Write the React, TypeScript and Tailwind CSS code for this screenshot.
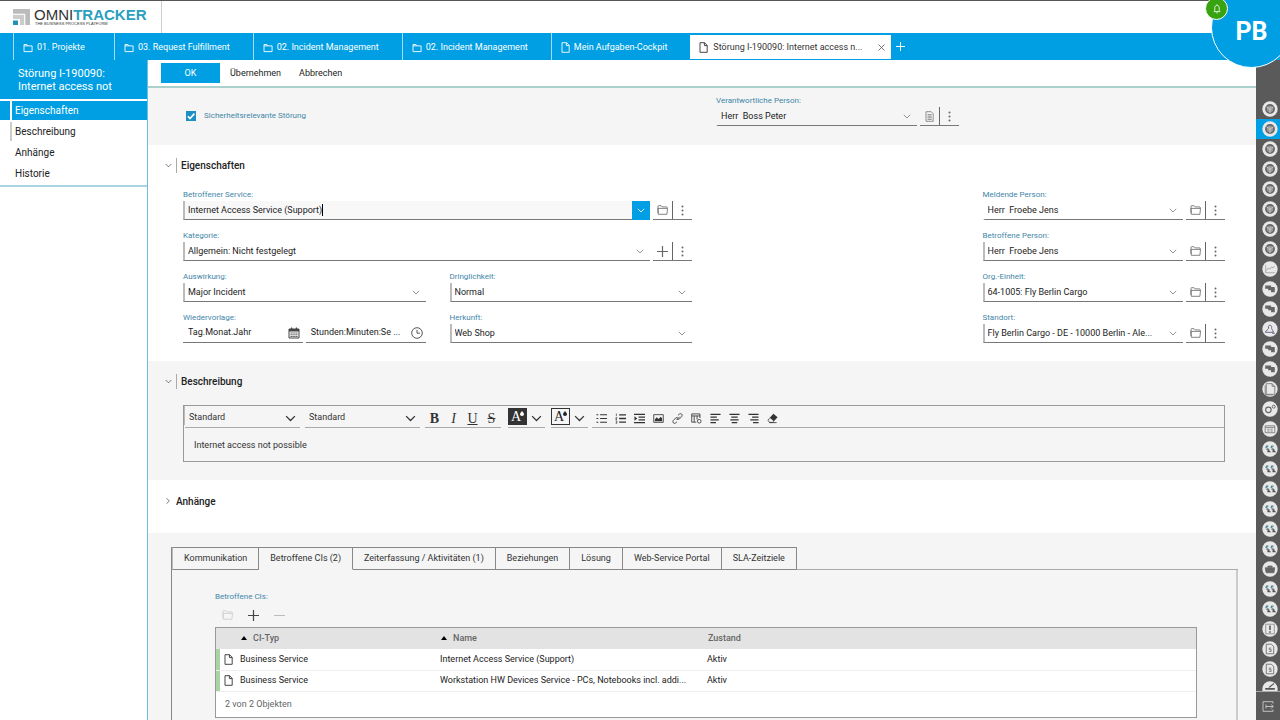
import type { ReactNode } from "react";
import { clsx } from "clsx";

function FolderIcon({ className = "h-[10px] w-[11px]" }: { className?: string }) {
  return (
    <svg viewBox="0 0 11 10" className={className} fill="none" stroke="currentColor" strokeWidth="0.8">
      <path d="M1 8V1.2c0-.3.2-.5.5-.5h2.6l1 1.2h4.6c.3 0 .5.2.5.5v1" />
      <path d="M.9 3.4h9.6l-.6 5.9H1.3z" />
    </svg>
  );
}

function TabFolderIcon() {
  return (
    <svg viewBox="0 0 10 10" className="h-[10px] w-[10px] shrink-0" fill="none" stroke="currentColor" strokeWidth="0.9">
      <path d="M1 8.6V1.5h3l.9 1.4h4.2v5.7zM1 2.9h3.9" />
    </svg>
  );
}

function DocIcon({ className = "h-[11px] w-[9px] shrink-0" }: { className?: string }) {
  return (
    <svg viewBox="0 0 9 11" className={className} fill="none" stroke="currentColor" strokeWidth="0.9">
      <path d="M1 .7h4.6L8.2 3.4v6.9H1zM5.4.7v2.9h2.8" />
    </svg>
  );
}

function ReportIcon() {
  return (
    <svg viewBox="0 0 9 11" className="h-[11px] w-[9px]" fill="none" stroke="currentColor" strokeWidth="0.7">
      <path d="M1 .7h5.2l2 2v7.6H1zM2.5 3.6h4.2M2.5 5.2h4.2M2.5 6.8h4.2M2.5 8.4h4.2" />
    </svg>
  );
}

function Chevron({ className = "h-[5px] w-[8px]" }: { className?: string }) {
  return (
    <svg viewBox="0 0 8 5" className={className} fill="none" stroke="currentColor" strokeWidth="0.9">
      <path d="M.8.8 4 4 7.2.8" />
    </svg>
  );
}

function PlusIcon({ className = "h-[11px] w-[11px]" }: { className?: string }) {
  return (
    <svg viewBox="0 0 11 11" className={className} fill="none" stroke="currentColor" strokeWidth="1.2">
      <path d="M5.5 0v11M0 5.5h11" />
    </svg>
  );
}

function DotsIcon() {
  return (
    <svg viewBox="0 0 3 11" className="h-[11px] w-[3px]" fill="currentColor">
      <circle cx="1.5" cy="1.6" r="1" />
      <circle cx="1.5" cy="5.5" r="1" />
      <circle cx="1.5" cy="9.4" r="1" />
    </svg>
  );
}

function Label({ htmlFor, children }: { htmlFor: string; children: ReactNode }) {
  return (
    <label htmlFor={htmlFor} className="block text-[8px] leading-3 text-[#3f86a8]">
      {children}
    </label>
  );
}

interface SelectFieldProps {
  id: string;
  label: string;
  value: string;
  required?: boolean;
  action?: ReactNode;
  actionLabel?: string;
}

function FieldActions({ icon, label }: { icon: ReactNode; label: string }) {
  return (
    <div className="flex h-[19px] w-[39px] shrink-0 border-b border-[#777] text-[#666]">
      <button aria-label={label} className="flex flex-1 items-center justify-center">
        {icon}
      </button>
      <button aria-label="Weitere Aktionen" className="flex w-5 items-center justify-center border-l border-[#666]">
        <DotsIcon />
      </button>
    </div>
  );
}

function SelectField({ id, label, value, required = true, action, actionLabel = "Öffnen" }: SelectFieldProps) {
  return (
    <div className="min-w-0">
      <Label htmlFor={id}>{label}</Label>
      <div className="flex gap-[3px]">
        <div
          className={clsx(
            "relative h-[19px] min-w-0 flex-1 border-b border-l-2 border-b-[#777]",
            required ? "border-l-[#bbb]" : "border-l-transparent",
          )}
        >
          <select
            id={id}
            defaultValue={value}
            className="block h-full w-full appearance-none bg-transparent pt-px pr-4 pl-[3px] text-[9px] text-[#222] outline-none"
          >
            <option>{value}</option>
          </select>
          <span className="pointer-events-none absolute inset-y-0 right-[6px] flex items-center text-[#888]">
            <Chevron />
          </span>
        </div>
        {action && <FieldActions icon={action} label={actionLabel} />}
      </div>
    </div>
  );
}

function SectionTitle({ children, open = true }: { children: ReactNode; open?: boolean }) {
  return (
    <button className="flex h-[15px] items-center pl-4 text-[10px] font-medium text-[#222]">
      <span className={clsx("flex w-2 justify-center text-[#555]", !open && "-rotate-90")}>
        <Chevron className="h-[5px] w-[7px]" />
      </span>
      <span className={clsx("flex h-full items-center pl-1", open && "ml-1 border-l border-[#aaa]")}>
        {children}
      </span>
    </button>
  );
}

const openTabs = [
  { name: "01. Projekte", folder: true },
  { name: "03. Request Fulfillment", folder: true },
  { name: "02. Incident Management", folder: true },
  { name: "02. Incident Management", folder: true },
  { name: "Mein Aufgaben-Cockpit", folder: false },
];

function Header() {
  return (
    <header className="relative shrink-0">
      <div className="flex h-[33px] border-t border-[#555] bg-white">
        <div className="flex w-[162px] items-center border-r border-[#ccc] pl-[13px]">
          <svg viewBox="0 0 17 17" className="h-[17px] w-[17px]">
            <path d="M0 0h17v16h-5V5H0z" fill="#bbb" />
            <path d="M0 6h11v10H7V10H0z" fill="#ccc" />
            <path d="M0 5h12v11" fill="none" stroke="#eee" strokeWidth="0.8" />
            <path d="M0 11.5h5V16H0z" fill="#2191b5" />
          </svg>
          <div className="ml-1 font-['Liberation_Sans',sans-serif]">
            <div className="text-[15px] leading-[14px] text-[#333]">
              OMNI<span className="font-bold text-[#2a9fc0]">TRACKER</span>
            </div>
            <div className="pl-px text-[4px] leading-[4px] text-[#333]">THE BUSINESS PROCESS PLATFORM</div>
          </div>
        </div>
      </div>
      <nav className="flex h-[27px] bg-[#009fe3] pl-[13px] text-[9px] text-white">
        {openTabs.map((tab, i) => (
          <button
            key={i}
            className="flex min-w-[101px] items-center gap-1 border-l border-[#a5dbf3] pt-[2px] pr-[23px] pl-[9px] whitespace-nowrap"
          >
            {tab.folder ? <TabFolderIcon /> : <DocIcon />}
            {tab.name}
          </button>
        ))}
        <div className="mt-[2px] mb-px flex w-[201px] items-center bg-white pr-[6px] pl-[9px] text-[#333]">
          <DocIcon />
          <button className="ml-[5px] flex-1 pt-px text-left whitespace-nowrap">Störung I-190090: Internet access n...</button>
          <button aria-label="Tab schließen">
            <svg viewBox="0 0 7 7" className="h-[7px] w-[7px]" stroke="#555" strokeWidth="0.8">
              <path d="M.5.5l6 6M6.5.5l-6 6" />
            </svg>
          </button>
        </div>
        <button aria-label="Neuer Tab" className="px-[5px]">
          <PlusIcon className="h-[9px] w-[9px]" />
        </button>
      </nav>
      <button
        aria-label="Benutzerprofil"
        className="absolute -top-[13px] -right-[12px] z-10 flex h-[81px] w-[81px] items-center justify-center rounded-full border border-white bg-[#009fe3] pt-[8px] text-[25px] font-bold text-white"
      >
        PB
      </button>
      <button
        aria-label="Benachrichtigungen"
        className="absolute -top-[3px] right-[52px] z-20 flex h-[23px] w-[23px] items-center justify-center rounded-full border border-white bg-[#37a310]"
      >
        <svg viewBox="0 0 8 10" className="h-[10px] w-[8px]" fill="none" stroke="#fff" strokeWidth="0.8">
          <path d="M1 7.6h6L6.2 6.4V3.8C6.2 2.3 5.2 1.3 4 1.3S1.8 2.3 1.8 3.8v2.6zM3.2 8.8h1.6M4 .4v.9" />
        </svg>
      </button>
    </header>
  );
}

const navItems = ["Eigenschaften", "Beschreibung", "Anhänge", "Historie"];

function Sidebar() {
  return (
    <aside className="w-[148px] shrink-0 border-r border-[#6dbfdf] bg-white">
      <h1 className="flex h-[39px] items-center bg-[#009fe3] pr-4 pl-[18px] text-[11px] leading-[13px] text-white">
        Störung I-190090: Internet access not
      </h1>
      <ul className="mt-[2px] border-b-2 border-[#a9d5e2] text-[10px] text-[#222]">
        {navItems.map((item, i) => (
          <li key={item} className={clsx("h-[21px]", i === 0 && "text-white")}>
            <a href={`#${item}`} className={clsx("flex h-[19px] items-center pl-[10px]", i === 0 && "bg-[#009fe3]")}>
              <span
                className={clsx(
                  "flex h-full items-center border-l-2 pl-[3px]",
                  i === 0 && "border-white",
                  i === 1 && "border-[#ccc]",
                  i > 1 && "border-transparent",
                )}
              >
                {item}
              </span>
            </a>
          </li>
        ))}
      </ul>
    </aside>
  );
}

type RailKind = "wheel" | "chart" | "flow" | "person" | "doc" | "gears" | "calendar" | "links" | "case" | "alert" | "price" | "sign";

const railItems: RailKind[] = [
  "wheel", "wheel", "wheel", "wheel", "wheel", "wheel", "wheel", "wheel",
  "chart", "flow", "flow", "person", "flow", "flow", "doc", "gears", "calendar",
  "links", "links", "links", "links", "links", "links", "case", "links", "links",
  "alert", "price", "price", "sign",
];

const railGlyphs: Record<RailKind, ReactNode> = {
  wheel: (
    <>
      <circle cx="7.5" cy="7.5" r="3.8" fill="#999" stroke="#666" strokeWidth="1.6" />
      <circle cx="7.5" cy="7.5" r="1.3" fill="#bbb" />
      <path d="M4.2 5.4l1.800 1.200M10.800 5.400 9 6.600M7.500 9v2.600" stroke="#ddd" strokeWidth="0.7" />
    </>
  ),
  chart: (
    <path d="M3.5 3.5v7.5h8.5M3.8 9l2-2.4 1.7 1 1.6-2.2 1.2 1.1L12 4.8" fill="none" stroke="#999" strokeWidth="0.7" />
  ),
  flow: <path d="M3 4.200h5.500v1.400H11c.6 0 1 .3 1 .9v4H8.500V8.600H5.800V7.200H3z" fill="#666" />,
  person: (
    <path
      d="M6 5a1.6 1.6 0 1 1 3 1.2C8.7 7.2 9.8 8 10.8 10.6H3.2C4 8.4 5.7 8 6.2 7zM9.5 11.5h2.5"
      fill="none"
      stroke="#557"
      strokeWidth="0.8"
    />
  ),
  doc: <path d="M4 2.5h5.5L12 5v7.5H4zM9.5 2.5V5H12M3 4v9h7" fill="none" stroke="#777" strokeWidth="0.8" />,
  gears: (
    <>
      <circle cx="6" cy="8.3" r="2.6" fill="none" stroke="#666" strokeWidth="1.1" />
      <circle cx="11" cy="5.3" r="1.4" fill="none" stroke="#666" strokeWidth="0.9" />
    </>
  ),
  calendar: <path d="M3 4.5h9V11H3zM3 6h9M5 7.7h2M8 7.7h2M5 9.4h2M8 9.4h2" fill="none" stroke="#777" strokeWidth="0.8" />,
  links: (
    <>
      <path d="M6 4.800H4.200L3.800 6.300 6 7M10.800 4.800H9L8.600 6.300 10.800 7" fill="none" stroke="#4f8191" strokeWidth="1.100" />
      <path d="M7 8.200H5.200L7.200 9.900H5M11.800 8.200H10l2 1.700H9.800" fill="none" stroke="#555" strokeWidth="1.100" />
    </>
  ),
  case: <path d="M3 6.3h9l-.8 4.7H3.8zM5.5 6V4.8h4V6" fill="#666" stroke="#666" strokeWidth="0.7" />,
  alert: (
    <>
      <path d="M3.5 3h8v9h-8z" fill="none" stroke="#888" strokeWidth="0.8" />
      <path d="M7.5 4.3v4.2M7.5 9.5V11" stroke="#444" strokeWidth="1.3" />
    </>
  ),
  price: (
    <>
      <path d="M4 3h4.7L11 5.2V12H4z" fill="none" stroke="#666" strokeWidth="0.8" />
      <path d="M8.7 6.6H6.8v1.5h1.8v1.7H6.6" fill="none" stroke="#666" strokeWidth="0.7" />
    </>
  ),
  sign: <path d="M3 6.5h9v1.6H3zM6 5.8l5-4 .7.8-4.5 3.7z" fill="#555" />,
};

function Rail() {
  return (
    <nav aria-label="Geöffnete Objekte" className="flex w-6 shrink-0 flex-col bg-[#5a5a5a]">
      <div className="min-h-0 flex-1 overflow-hidden pt-[39px]">
        {railItems.map((kind, i) => (
          <button key={i} aria-label={kind} className={clsx("flex h-5 w-full items-center pl-[6px]", i === 1 && "bg-[#009fe3]")}>
            <svg viewBox="0 0 15 15" className="h-4 w-4 shrink-0">
              <circle cx="7.5" cy="7.5" r="7.2" fill="#e8e8e8" />
              {railGlyphs[kind]}
            </svg>
          </button>
        ))}
      </div>
      <button aria-label="Abmelden" className="flex h-[29px] shrink-0 items-center justify-center border-t border-[#aaa]">
        <svg viewBox="0 0 12 11" className="h-[11px] w-[12px]" fill="none" stroke="#ccc" strokeWidth="0.9">
          <path d="M11 2.5V.7H1v9.6h10V8.5M4 3.5v4M4 5.5h7M9 3.3l2.2 2.2L9 7.7" />
        </svg>
      </button>
    </nav>
  );
}

function Properties() {
  return (
    <section className="pt-[13px] pb-[18px]">
      <SectionTitle>Eigenschaften</SectionTitle>
      <div className="mt-4 grid grid-cols-4 gap-x-6 pr-[31px] pl-[35px]">
        <div className="col-span-2 grid grid-cols-2 gap-x-6 gap-y-[10px]">
          <div className="col-span-2">
            <Label htmlFor="service">Betroffener Service:</Label>
            <div className="flex gap-[3px]">
              <div className="flex h-[19px] flex-1 items-center border-b border-l-2 border-b-[#777] border-l-[#bbb] bg-[#f8f8f8]">
                <input
                  id="service"
                  defaultValue="Internet Access Service (Support)"
                  className="field-sizing-content bg-transparent pt-px pl-[3px] text-[9px] text-[#222] outline-none"
                />
                <span className="h-3 w-px bg-black" />
                <button
                  aria-label="Auswahl öffnen"
                  className="ml-auto flex h-[19px] w-[18px] items-center justify-center bg-[#009fe3] text-white"
                >
                  <Chevron />
                </button>
              </div>
              <FieldActions icon={<FolderIcon />} label="Öffnen" />
            </div>
          </div>
          <div className="col-span-2">
            <SelectField id="category" label="Kategorie:" value="Allgemein: Nicht festgelegt" action={<PlusIcon />} actionLabel="Neu" />
          </div>
          <SelectField id="impact" label="Auswirkung:" value="Major Incident" />
          <SelectField id="urgency" label="Dringlichkeit:" value="Normal" />
          <div>
            <Label htmlFor="date">Wiedervorlage:</Label>
            <div className="flex gap-[3px] text-[#444]">
              <div className="flex h-[19px] min-w-0 flex-1 items-center border-b border-[#777] pr-[3px] pl-[5px]">
                <input
                  id="date"
                  placeholder="Tag.Monat.Jahr"
                  className="min-w-0 flex-1 bg-transparent text-[9px] outline-none placeholder:text-[#222]"
                />
                <svg viewBox="0 0 12 12" className="h-3 w-3 shrink-0">
                  <path d="M1 2h10v9H1z" fill="none" stroke="currentColor" />
                  <path d="M1 2h10v2.5H1zM3 .5h1.2V2H3zM7.8.5H9V2H7.8z" fill="currentColor" />
                  <path d="M2.5 6h7M2.5 7.8h7M2.5 9.5h7" stroke="currentColor" strokeDasharray="1.3 0.6" />
                </svg>
              </div>
              <div className="flex h-[19px] min-w-0 flex-1 items-center border-b border-[#777] pr-[3px] pl-[5px]">
                <input
                  aria-label="Uhrzeit"
                  placeholder="Stunden:Minuten:Se ..."
                  className="min-w-0 flex-1 bg-transparent text-[9px] outline-none placeholder:text-[#222]"
                />
                <svg viewBox="0 0 12 12" className="h-3 w-3 shrink-0" fill="none" stroke="currentColor" strokeWidth="0.9">
                  <circle cx="6" cy="6" r="5.3" />
                  <path d="M6 2.8V6.2h3" />
                </svg>
              </div>
            </div>
          </div>
          <SelectField id="origin" label="Herkunft:" value="Web Shop" />
        </div>
        <div className="col-start-4 flex min-w-0 flex-col gap-[10px]">
          <SelectField id="reporter" label="Meldende Person:" value={"Herr\u00a0 Froebe Jens"} required={false} action={<FolderIcon />} />
          <SelectField id="affected" label="Betroffene Person:" value={"Herr\u00a0 Froebe Jens"} action={<FolderIcon />} />
          <SelectField id="unit" label="Org.-Einheit:" value="64-1005: Fly Berlin Cargo" action={<FolderIcon />} />
          <SelectField id="site" label="Standort:" value="Fly Berlin Cargo - DE - 10000 Berlin - Ale..." action={<FolderIcon />} />
        </div>
      </div>
    </section>
  );
}

function ToolbarSelect({ label }: { label: string }) {
  return (
    <div className="relative h-[22px] w-[115px] border-b border-[#aaa] pt-[3px]">
      <select
        aria-label={label}
        className="block h-full w-full appearance-none bg-transparent pl-1 text-[9px] text-[#333] outline-none"
      >
        <option>Standard</option>
      </select>
      <span className="pointer-events-none absolute inset-y-0 right-1 flex items-center pt-[3px] text-[#333]">
        <Chevron className="h-[7px] w-[11px]" />
      </span>
    </div>
  );
}

const editorTools: { name: string; icon: ReactNode }[] = [
  {
    name: "Aufzählung",
    icon: <path d="M4.5 2H12M4.5 6H12M4.5 10H12M.5 2h2M.5 6h2M.5 10h2" strokeWidth="1.1" />,
  },
  {
    name: "Nummerierung",
    icon: (
      <>
        <path d="M4.5 2H12M4.5 6H12M4.5 10H12" strokeWidth="1.4" />
        <path d="M1.5.5v3M.7 5h1.3v1H.9v1h1.3M.7 8.5h1.3v2.8H.7M.9 9.9h1" strokeWidth="0.7" />
      </>
    ),
  },
  {
    name: "Einzug",
    icon: (
      <>
        <path d="M0 1.5h12M5 4.5h7M5 7.5h7M0 10.5h12" strokeWidth="1.3" />
        <path d="M.5 3.5 3.5 6l-3 2.5z" fill="currentColor" stroke="none" />
      </>
    ),
  },
  {
    name: "Bild",
    icon: (
      <>
        <path d="M.8 1.8h10.4v8.4H.8z" strokeWidth="0.9" />
        <path d="M2 9V7l2-2.5 2 2L8.5 4 10 6v3z" fill="currentColor" stroke="none" />
      </>
    ),
  },
  {
    name: "Link",
    icon: (
      <path
        d="M5 7.5 8.5 4M6.5 2.5l1.6-1.4c1.8-1.3 3.9.8 2.6 2.6L8.2 6.4c-1 1-2.3.7-3 0M5.5 9.5l-1.6 1.4c-1.8 1.3-3.9-.8-2.6-2.6l2.5-2.7c1-1 2.3-.7 3 0"
        strokeWidth="0.9"
      />
    ),
  },
  {
    name: "Tabelle",
    icon: (
      <>
        <path d="M.8 1h9v4.5M.8 1v9h5M.8 3.2h9M3.5 3.2V10M6.6 3.2v4" strokeWidth="0.9" />
        <circle cx="9" cy="9" r="2" strokeWidth="0.9" />
      </>
    ),
  },
  { name: "Linksbündig", icon: <path d="M.5 1.5h11M.5 4.5h7M.5 7.5h9M.5 10.5h6" strokeWidth="1.3" /> },
  { name: "Zentriert", icon: <path d="M.5 1.5h11M2.5 4.5h7M1.5 7.5h9M3 10.5h6" strokeWidth="1.3" /> },
  { name: "Rechtsbündig", icon: <path d="M.5 1.5h11M4.5 4.5h7M2.5 7.5h9M5.5 10.5h6" strokeWidth="1.3" /> },
  {
    name: "Formatierung entfernen",
    icon: (
      <>
        <path d="M7 .8 11.5 4.5 7.5 9 3 5.3z" fill="currentColor" stroke="none" />
        <path d="M2.8 5.8 1 8.2l2 2h3l1.3-1M2.5 10.5h8" strokeWidth="0.9" />
      </>
    ),
  },
];

function ColorButton({ dark, label }: { dark?: boolean; label: string }) {
  return (
    <button aria-label={label} className="flex h-[22px] w-[37px] items-center gap-1 border-b border-[#aaa] text-[#333]">
      <span
        className={clsx(
          "relative flex h-[17px] w-[19px] items-center justify-center border border-[#333] pr-[3px] font-['Liberation_Serif',serif] text-[14px] leading-none",
          dark ? "bg-[#333] text-white" : "text-[#222]",
        )}
      >
        A
        <svg viewBox="0 0 4 5" className="absolute top-[2px] right-[2px] h-[5px] w-1" fill="currentColor">
          <path d="M2 0C3 1.5 4 2.2 4 3.2a2 1.8 0 0 1-4 0C0 2.2 1 1.5 2 0z" />
        </svg>
      </span>
      <span className="pt-[3px]">
        <Chevron className="h-[7px] w-[11px]" />
      </span>
    </button>
  );
}

function Description() {
  return (
    <section className="bg-[#f5f5f5] pt-[13px] pb-[18px]">
      <SectionTitle>Beschreibung</SectionTitle>
      <div className="mt-4 mr-[31px] ml-[35px] border border-[#999]">
        <div className="flex text-[#333]">
          <div className="h-[19px] w-px bg-[#bbb]" />
          <ToolbarSelect label="Schriftart" />
          <div className="ml-[5px]">
            <ToolbarSelect label="Schriftgröße" />
          </div>
          <div className="ml-[5px] flex h-[22px] border-b border-[#aaa] pt-[5px] font-['Liberation_Serif',serif] text-[14px] leading-none">
            <button className="w-[19px] font-bold">B</button>
            <button className="w-[19px] italic">I</button>
            <button className="w-[19px] underline">U</button>
            <button className="w-[19px] line-through">S</button>
          </div>
          <div className="ml-[7px] flex gap-[6px]">
            <ColorButton dark label="Hintergrundfarbe" />
            <ColorButton label="Textfarbe" />
          </div>
          <div className="ml-1 flex h-[22px] flex-1 border-b border-[#aaa] pt-[4px]">
            {editorTools.map((tool) => (
              <button key={tool.name} aria-label={tool.name} className="flex w-[19px] items-center justify-center">
                <svg viewBox="0 0 12 12" className="h-[11px] w-[11px]" fill="none" stroke="currentColor">
                  {tool.icon}
                </svg>
              </button>
            ))}
          </div>
        </div>
        <textarea
          aria-label="Beschreibung"
          defaultValue="Internet access not possible"
          className="block h-[33px] w-full resize-none bg-transparent px-[10px] pt-[11px] text-[9px] leading-[13px] text-[#333] outline-none"
        />
      </div>
    </section>
  );
}

const detailTabs = [
  "Kommunikation",
  "Betroffene CIs (2)",
  "Zeiterfassung / Aktivitäten (1)",
  "Beziehungen",
  "Lösung",
  "Web-Service Portal",
  "SLA-Zeitziele",
];

const configItems = [
  { type: "Business Service", name: "Internet Access Service (Support)", state: "Aktiv" },
  {
    type: "Business Service",
    name: "Workstation HW Devices Service - PCs, Notebooks incl. addi...",
    state: "Aktiv",
  },
];

function SortArrow() {
  return (
    <span className="mr-[6px] inline-block border-x-[3px] border-b-4 border-x-transparent border-b-black align-middle" />
  );
}

function Details() {
  return (
    <section className="flex-1 bg-[#f5f5f5] pt-[14px] pr-[18px] pl-[23px]">
      <div role="tablist" className="flex h-[23px] border-l border-[#888] text-[9px] text-[#333]">
        {detailTabs.map((tab, i) => (
          <button
            key={tab}
            role="tab"
            aria-selected={i === 1}
            className={clsx(
              "border-t border-r border-b border-[#888] px-[11px] whitespace-nowrap",
              i === 0 && "border-l border-l-[#bbb]",
              i === 1 && "border-b-transparent",
            )}
          >
            {tab}
          </button>
        ))}
        <div className="flex-1 border-b border-[#aaa]" />
      </div>
      <div className="h-full border-r-2 border-l border-r-[#ccc] border-l-[#888] pt-[21px] pr-[39px] pl-[43px]">
        <h2 className="text-[8px] leading-3 text-[#3f86a8]">Betroffene CIs:</h2>
        <div className="flex h-6 items-center gap-[15px] pl-[7px] text-[#444]">
          <button aria-label="Öffnen" disabled className="text-[#ccc]">
            <FolderIcon />
          </button>
          <button aria-label="Hinzufügen">
            <PlusIcon />
          </button>
          <button aria-label="Entfernen" disabled className="h-px w-[11px] bg-[#bbb]" />
        </div>
        <div className="border border-[#999] bg-white text-[9px] text-[#222]">
          <table className="w-full table-fixed text-left">
            <thead>
              <tr className="h-[21px] bg-[#e3e3e3] text-[#666]">
                <th className="w-6" />
                <th className="w-[200px] pl-px font-medium">
                  <SortArrow />
                  CI-Typ
                </th>
                <th className="w-[267px] pl-px font-medium">
                  <SortArrow />
                  Name
                </th>
                <th className="pl-px font-medium">Zustand</th>
              </tr>
            </thead>
            <tbody>
              {configItems.map((item) => (
                <tr key={item.name} className="h-[21px] border-b border-[#eee]">
                  <td className="pl-2 shadow-[inset_4px_0_0_#a9d3a5]">
                    <DocIcon className="h-[11px] w-[9px] text-[#333]" />
                  </td>
                  <td>{item.type}</td>
                  <td className="whitespace-nowrap">{item.name}</td>
                  <td>{item.state}</td>
                </tr>
              ))}
            </tbody>
          </table>
          <p className="flex h-[25px] items-center pt-px pl-[9px] text-[#666]">2 von 2 Objekten</p>
        </div>
      </div>
    </section>
  );
}

export default function App() {
  return (
    <div className="flex h-screen flex-col overflow-hidden bg-white font-[Roboto,sans-serif]">
      <Header />
      <div className="flex min-h-0 flex-1">
        <Sidebar />
        <main className="flex min-w-0 flex-1 flex-col overflow-hidden">
          <div className="flex h-7 shrink-0 items-start border-b-2 border-[#a9d0cb] pt-[3px] pl-[13px] text-[9px] text-[#222]">
            <button className="h-5 w-[59px] bg-[#009fe3] pt-[2px] text-white">OK</button>
            <button className="ml-[10px] h-5 pt-[2px]">Übernehmen</button>
            <button className="ml-[18px] h-5 pt-[2px]">Abbrechen</button>
          </div>
          <section className="grid grid-cols-4 gap-x-6 bg-[#f5f5f5] pt-[7px] pr-[31px] pb-[19px] pl-[35px]">
            <label className="flex items-center gap-2 pt-[10px] pl-[3px] text-[8px] text-[#3f86a8]">
              <span className="relative flex h-[10px] w-[10px]">
                <input type="checkbox" defaultChecked className="h-[10px] w-[10px] appearance-none bg-[#1c8fc4]" />
                <svg viewBox="0 0 10 10" className="pointer-events-none absolute inset-0" fill="none" stroke="#fff" strokeWidth="1.6">
                  <path d="M1.8 5.2 4 7.5 8.4 2.6" />
                </svg>
              </span>
              Sicherheitsrelevante Störung
            </label>
            <div className="col-start-3 min-w-0">
              <SelectField
                id="responsible"
                label="Verantwortliche Person:"
                value={"Herr\u00a0 Boss Peter"}
                required={false}
                action={<ReportIcon />}
              />
            </div>
          </section>
          <Properties />
          <Description />
          <section className="pt-[14px] pb-6">
            <SectionTitle open={false}>Anhänge</SectionTitle>
          </section>
          <Details />
        </main>
        <Rail />
      </div>
    </div>
  );
}
